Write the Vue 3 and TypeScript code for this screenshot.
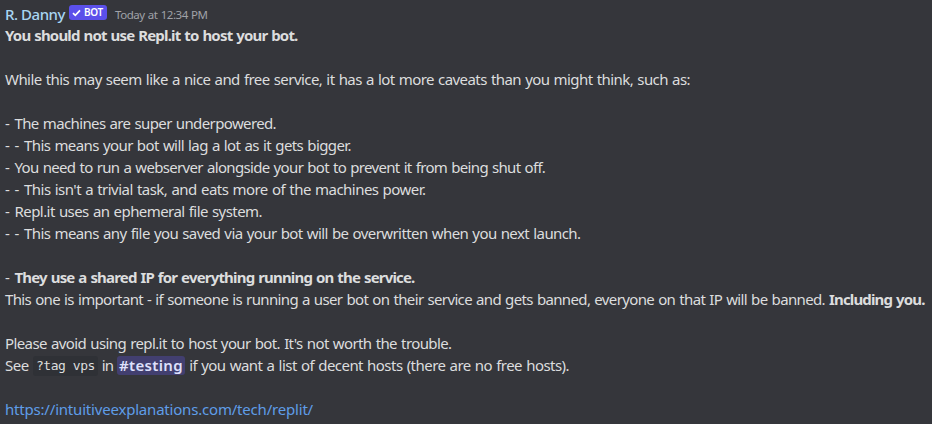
<script setup lang="ts">
import type { Directive } from 'vue'

type Kind = 'plain' | 'bold' | 'code' | 'mention' | 'link'

interface Run {
  text: string
  width: number
  kind?: Kind
}

const dash: Run = { text: '- ', width: 9.5 }

// Each line is a list of runs; an empty list is a blank line.
const lines: Run[][] = [
  [{ text: 'You should not use Repl.it to host your bot.', width: 292.5, kind: 'bold' }],
  [],
  [{ text: 'While this may seem like a nice and free service, it has a lot more caveats than you might think, such as:', width: 685 }],
  [],
  [dash, { text: 'The machines are super underpowered.', width: 261.5 }],
  [dash, dash, { text: 'This means your bot will lag a lot as it gets bigger.', width: 327 }],
  [dash, { text: 'You need to run a webserver alongside your bot to prevent it from being shut off.', width: 530.5 }],
  [dash, dash, { text: "This isn't a trivial task, and eats more of the machines power.", width: 401.5 }],
  [dash, { text: 'Repl.it uses an ephemeral file system.', width: 247.5 }],
  [dash, dash, { text: 'This means any file you saved via your bot will be overwritten when you next launch.', width: 556.5 }],
  [],
  [dash, { text: 'They use a shared IP for everything running on the service.', width: 400, kind: 'bold' }],
  [
    { text: 'This one is important - if someone is running a user bot on their service and gets banned, everyone on that IP will be banned. ', width: 824 },
    { text: 'Including you.', width: 95.5, kind: 'bold' },
  ],
  [],
  [{ text: "Please avoid using repl.it to host your bot. It's not worth the trouble.", width: 446.5 }],
  [
    { text: 'See ', width: 28 },
    { text: '?tag vps', width: 59, kind: 'code' },
    { text: ' in ', width: 19 },
    { text: '#testing', width: 64, kind: 'mention' },
    { text: ' if you want a list of decent hosts (there are no free hosts).', width: 384 },
  ],
  [],
  [{ text: 'https://intuitiveexplanations.com/tech/replit/', width: 308, kind: 'link' }],
]

// Spreads a run's letters evenly so that it sets to the given width.
const vFit: Directive<HTMLElement, number> = {
  mounted(el, { value }) {
    const natural = el.getBoundingClientRect().width
    const count = (el.textContent ?? '').length
    el.style.letterSpacing = `${(value - natural) / count}px`
  },
}
</script>

<template>
  <article class="message">
    <header class="header">
      <span v-fit="60" class="name">R. Danny</span>
      <span class="badge">
        <svg class="check" viewBox="0 0 9 8" aria-hidden="true">
          <path d="M1 4.2 3.3 6.4 8 1.4" />
        </svg>
        <span v-fit="19" class="bot">BOT</span>
      </span>
      <time v-fit="92.5" class="time">Today at 12:34 PM</time>
    </header>
    <div class="body">
      <p v-for="(line, i) in lines" :key="i" class="line">
        <span v-for="(run, j) in line" :key="j" :class="run.kind ?? 'plain'"><span v-fit="run.width" class="fit">{{ run.text }}</span></span>
      </p>
    </div>
  </article>
</template>

<style>
body {
  background: #35363b;
}
</style>

<style scoped>
.message {
  box-sizing: border-box;
  height: 424px;
  padding: 2px 0 0 5px;
  overflow: hidden;
  background: #35363b;
  color: #dcddde;
  font-family: 'Noto Sans', 'Open Sans', sans-serif;
  font-size: 15px;
  line-height: 22px;
  font-variant-ligatures: none;
  white-space: pre;
}
.header {
  display: flex;
  align-items: center;
  height: 22px;
}
.name {
  padding-top: 1px;
  color: #a8d5f2;
  font-weight: 500;
}
.badge {
  display: flex;
  align-items: center;
  box-sizing: border-box;
  width: 38px;
  height: 15px;
  margin: 0 8px 1px 4px;
  padding-left: 3px;
  gap: 3px;
  border-radius: 3px;
  background: #5b50ea;
  color: #fff;
}
.check {
  width: 9px;
  height: 8px;
  flex: none;
  fill: none;
  stroke: #fff;
  stroke-width: 1.7;
}
.bot {
  font-size: 10px;
  line-height: 15px;
  font-weight: 600;
}
.time {
  padding-top: 3px;
  color: #a0a2a8;
  font-size: 11.5px;
  word-spacing: 0.6px;
}
.line {
  display: flex;
  height: 22px;
  margin: 0;
}
.plain,
.bold {
  word-spacing: 0.8px;
}
.bold {
  font-weight: 700;
}
.code {
  height: 20px;
  margin-top: 2px;
  padding: 0 3px;
  border-radius: 3px;
  background: #2f3136;
  font-family: 'DejaVu Sans Mono', monospace;
  font-size: 13px;
  line-height: 20px;
}
.mention {
  height: 19px;
  margin-top: 2px;
  padding: 0 2px;
  border-radius: 3px;
  background: #423f70;
  color: #dee0fc;
  font-weight: 600;
  line-height: 18px;
}
.link {
  color: #5f9de8;
}
</style>
